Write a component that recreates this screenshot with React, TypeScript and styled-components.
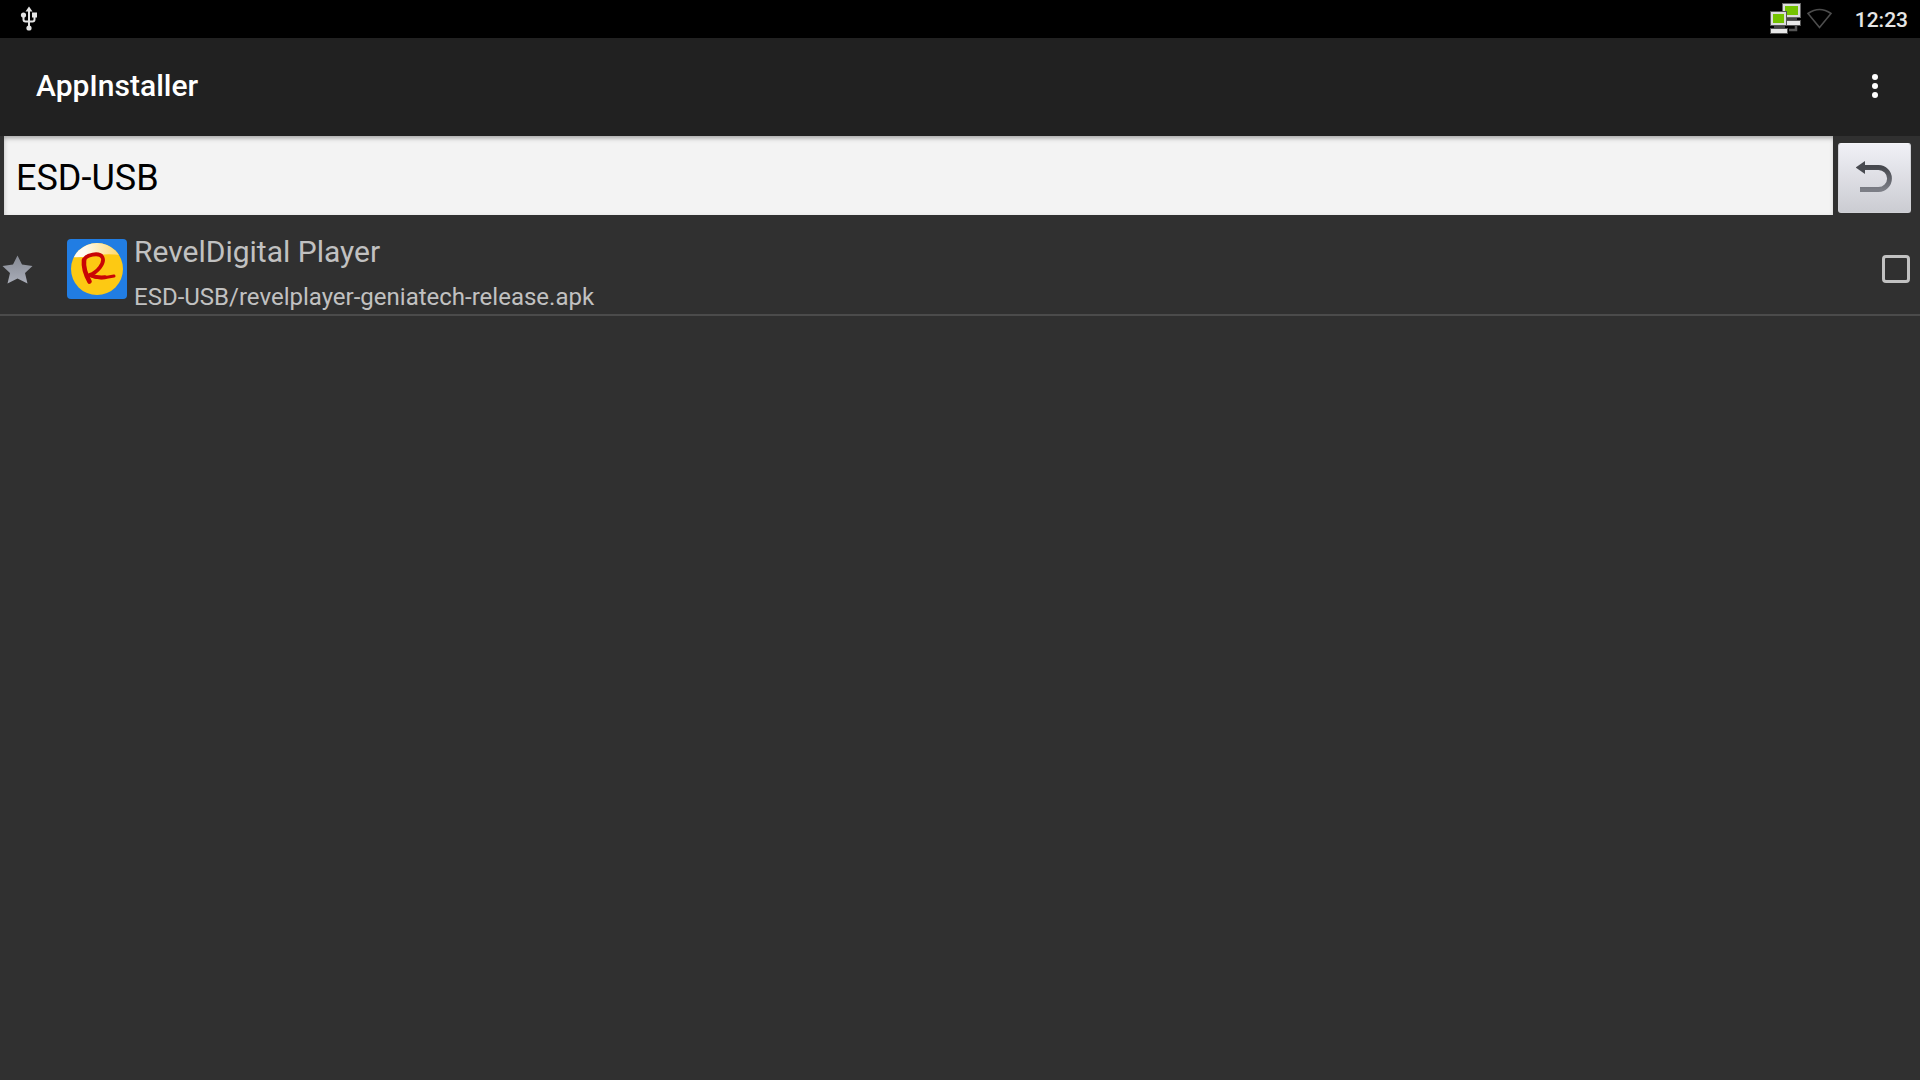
import React, { useState } from "react";
import styled, { createGlobalStyle } from "styled-components";

const GlobalStyle = createGlobalStyle`
  * { box-sizing: border-box; }
  body {
    margin: 0;
    background: #303030;
    font-family: Roboto, "Noto Sans", sans-serif;
  }
`;

const Screen = styled.div`
  display: flex;
  flex-direction: column;
  min-height: 100vh;
  background: #303030;
`;

const StatusBar = styled.header`
  display: flex;
  align-items: center;
  justify-content: space-between;
  height: 38px;
  padding: 0 12px 0 20px;
  background: #000;
`;

const StatusGroup = styled.div`
  display: flex;
  align-items: center;
  gap: 4px;
`;

const Clock = styled.time`
  padding: 2px 0 0 18px;
  color: #e6e6e6;
  font-size: 21px;
  font-weight: 500;
  line-height: 26px;
`;

const AppBar = styled.div`
  display: flex;
  align-items: center;
  justify-content: space-between;
  height: 98px;
  padding: 0 36px 2px;
  background: #212121;
`;

const Title = styled.h1`
  margin: 0;
  color: #fff;
  font-size: 30px;
  font-weight: 500;
  line-height: 36px;
`;

const MenuButton = styled.button`
  display: flex;
  width: 18px;
  height: 48px;
  padding: 0;
  align-items: center;
  justify-content: center;
  border: 0;
  background: none;
`;

const PathBar = styled.form`
  display: flex;
  align-items: center;
  gap: 5px;
  padding: 0 9px 0 4px;
`;

const PathInput = styled.input`
  flex: 1;
  min-width: 0;
  height: 79px;
  padding: 4px 12px 0;
  border: 0;
  border-radius: 0;
  outline: 0;
  background: #f3f3f3;
  box-shadow: inset 0 4px 5px -2px #a2a2a2, inset 2px 0 4px -1px #dcdcdc;
  color: #000;
  font-family: inherit;
  font-size: 36px;
  line-height: 44px;
`;

const BackButton = styled.button`
  display: flex;
  width: 73px;
  height: 70px;
  margin-top: 5px;
  padding: 0;
  align-items: center;
  justify-content: center;
  border: 1px solid #d0d1d6;
  border-top-color: #f4f4f8;
  border-radius: 3px;
  background: linear-gradient(#f0f0f6, #cbccd2);
`;

const FileList = styled.ul`
  margin: 0;
  padding: 0;
  list-style: none;
`;

const FileRow = styled.li`
  border-bottom: 2px solid #4b4b4b;
`;

const FileLabel = styled.label`
  display: flex;
  align-items: center;
  padding: 9px 10px 0 2px;
`;

const AppIcon = styled.svg`
  margin: 0 7px 0 34px;
`;

const FileText = styled.span`
  display: flex;
  flex: 1;
  min-width: 0;
  flex-direction: column;
  gap: 12px;
  padding: 10px 0 2px;
  color: #c1c1c1;
`;

const FileName = styled.span`
  font-size: 30px;
  line-height: 36px;
`;

const FilePath = styled.span`
  font-size: 24px;
  line-height: 30px;
`;

const Checkbox = styled.input`
  appearance: none;
  width: 28px;
  height: 28px;
  margin: 0;
  border: 3px solid #c1c1c1;
  border-radius: 4px;

  &:checked {
    background: #80cbc4;
  }
`;

const UsbIcon = () => (
  <svg width="18" height="26" viewBox="0 0 18 26" aria-hidden="true">
    <g fill="none" stroke="#e4e4e4" strokeWidth="2">
      <path d="M9 4v18M3.500 9v4.500q0 2 2 2h7q2 0 2-2V9" />
    </g>
    <g fill="#e4e4e4">
      <path d="M9 .5l3.500 5h-7z" />
      <circle cx="3.500" cy="9" r="2.600" />
      <rect x="12" y="6.500" width="5" height="5" />
      <circle cx="9" cy="22" r="2.600" />
    </g>
  </svg>
);

const EthernetIcon = () => (
  <svg width="32" height="32" viewBox="0 3 32 32" aria-hidden="true">
    <path d="M19 30h7v-5" fill="none" stroke="#555" strokeWidth="2.500" />
    <path d="M17 17h10v3H17z" fill="#444" />
    <rect x="14.500" y="20.500" width="16" height="5" fill="#e8e8e8" stroke="#555" />
    <rect x="12.500" y="3.500" width="18" height="14" fill="#dcdcdc" stroke="#666" />
    <rect x="15" y="6" width="13" height="9" fill="#74c300" />
    <path d="M4 25h11v3H4z" fill="#444" />
    <rect x=".5" y="28.500" width="17" height="5" fill="#e8e8e8" stroke="#555" />
    <rect x=".5" y="11.500" width="16" height="14" fill="#dcdcdc" stroke="#555" />
    <rect x="3" y="14" width="11" height="9" fill="#74c300" />
  </svg>
);

const WifiIcon = () => (
  <svg width="27" height="22" viewBox="0 0 27 22" aria-hidden="true">
    <path d="M2 5.500Q13.500-2.500 25 5.500L13.500 19.500z" fill="none" stroke="#4d4d4d" strokeWidth="1.600" />
  </svg>
);

const MoreIcon = () => (
  <svg width="6" height="24" viewBox="0 0 6 24" fill="#fff" aria-hidden="true">
    <circle cx="3" cy="3" r="3" />
    <circle cx="3" cy="12" r="3" />
    <circle cx="3" cy="21" r="3" />
  </svg>
);

const ReturnIcon = () => (
  <svg width="38" height="34" viewBox="0 0 38 34" aria-hidden="true">
    <defs>
      <linearGradient id="return-stroke" x1="0" y1="0" x2="0" y2="1">
        <stop offset="0" stopColor="#46484e" />
        <stop offset="1" stopColor="#7c7e86" />
      </linearGradient>
    </defs>
    <path d="M7 6.500H22.500a11 11 0 0 1 0 22H4" fill="none" stroke="url(#return-stroke)" strokeWidth="4.800" />
    <path d="M-.5 6.500L9 0v13z" fill="#484a50" />
  </svg>
);

const StarIcon = () => (
  <svg width="31" height="30" viewBox="0 0 31 30" aria-hidden="true">
    <defs>
      <linearGradient id="star-fill" x1="0" y1="0" x2="0" y2="1">
        <stop offset="0" stopColor="#858993" />
        <stop offset="1" stopColor="#a9adb8" />
      </linearGradient>
    </defs>
    <path
      d="M15.500 1.500l4.500 9 10.500 1.500-7.500 7 2.500 10.500-10-5-10 5L8 19 .5 12 11 10.500z"
      fill="url(#star-fill)"
    />
  </svg>
);

const PlayerIcon = () => (
  <AppIcon width="60" height="60" viewBox="0 0 60 60" aria-hidden="true">
    <defs>
      <linearGradient id="player-gloss" x1="0" y1="0" x2="1" y2="0">
        <stop offset="0" stopColor="#fff" />
        <stop offset=".3" stopColor="#fffaf0" />
        <stop offset="1" stopColor="#fdd04a" />
      </linearGradient>
      <clipPath id="player-disc">
        <circle cx="30" cy="30" r="26" />
      </clipPath>
    </defs>
    <rect width="60" height="60" rx="4" fill="#217de3" />
    <g clipPath="url(#player-disc)">
      <rect width="60" height="60" fill="#fdc913" />
      <path d="M0 0h60v17q-16-3-29-1-12 3-31 2z" fill="url(#player-gloss)" />
    </g>
    <g fill="none" stroke="#c90505" strokeLinecap="round" strokeLinejoin="round">
      <path d="M17 21q-1 10 5.500 21.500" strokeWidth="4.600" />
      <path d="M17 22c1-7 16-9 18.500-3.500s-5 15-13 17.500" strokeWidth="3.800" />
      <path d="M23 36c5 3.500 13 3.500 24 1" strokeWidth="3" />
      <path d="M24 36.500q6 2.500 14 1.800" strokeWidth="4" />
    </g>
  </AppIcon>
);

const files = [
  { name: "RevelDigital Player", path: "ESD-USB/revelplayer-geniatech-release.apk" },
];

export default function App() {
  const [path, setPath] = useState("ESD-USB");

  return (
    <Screen>
      <GlobalStyle />
      <StatusBar>
        <UsbIcon />
        <StatusGroup>
          <EthernetIcon />
          <WifiIcon />
          <Clock>12:23</Clock>
        </StatusGroup>
      </StatusBar>
      <AppBar>
        <Title>AppInstaller</Title>
        <MenuButton type="button" aria-label="More options">
          <MoreIcon />
        </MenuButton>
      </AppBar>
      <main>
        <PathBar onSubmit={(event) => event.preventDefault()}>
          <PathInput
            aria-label="Folder"
            value={path}
            onChange={(event) => setPath(event.target.value)}
          />
          <BackButton type="button" aria-label="Up one folder">
            <ReturnIcon />
          </BackButton>
        </PathBar>
        <FileList>
          {files.map((file) => (
            <FileRow key={file.path}>
              <FileLabel>
                <StarIcon />
                <PlayerIcon />
                <FileText>
                  <FileName>{file.name}</FileName>
                  <FilePath>{file.path}</FilePath>
                </FileText>
                <Checkbox type="checkbox" />
              </FileLabel>
            </FileRow>
          ))}
        </FileList>
      </main>
    </Screen>
  );
}
